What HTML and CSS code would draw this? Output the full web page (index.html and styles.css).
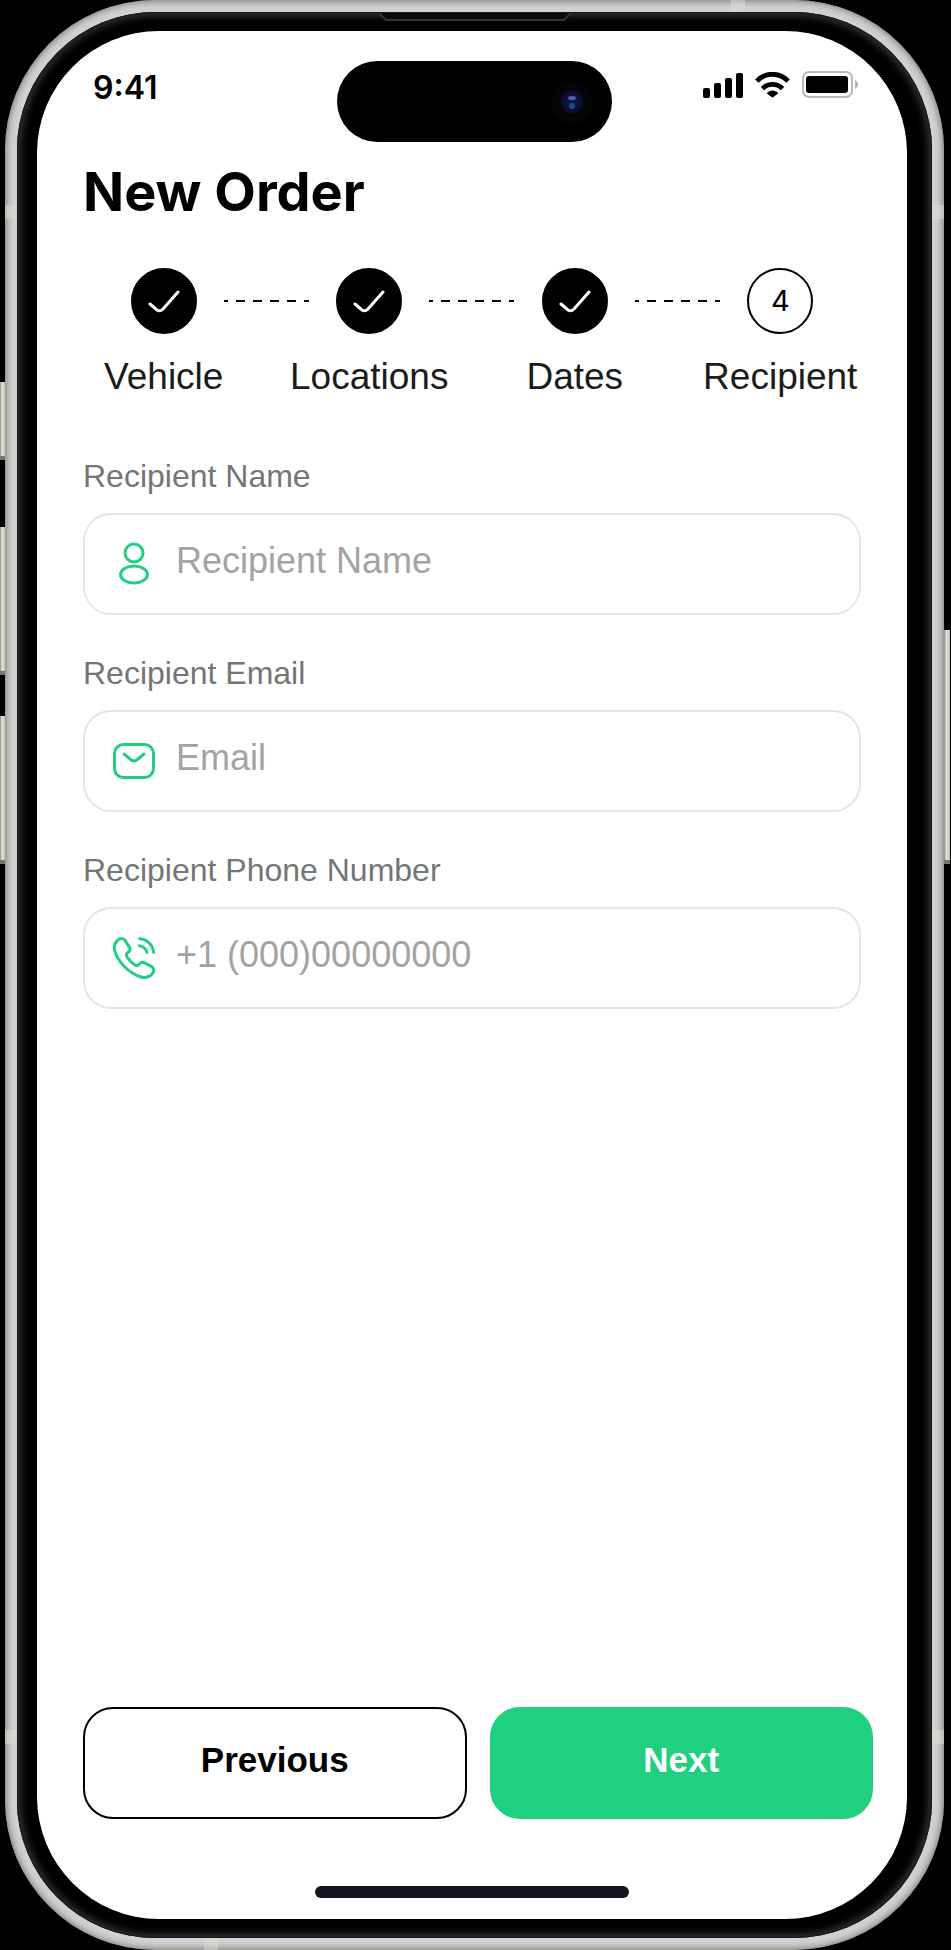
FILE: index.html
```html
<!DOCTYPE html>
<html lang="en">
<head>
<meta charset="utf-8">
<meta name="viewport" content="width=device-width, initial-scale=1">
<title>New Order</title>
<link rel="stylesheet" href="styles.css">
</head>
<body>
<div class="device">
  <span class="key key-action"></span>
  <span class="key key-up"></span>
  <span class="key key-down"></span>
  <span class="key key-power"></span>
  <span class="band band-side band-upper band-left"></span>
  <span class="band band-side band-upper band-right"></span>
  <span class="band band-side band-lower band-left"></span>
  <span class="band band-side band-lower band-right"></span>
  <span class="band band-top"></span>
  <span class="band band-bottom"></span>
  <div class="bezel">
    <svg class="speaker" width="192" height="9" viewBox="0 0 192 9" aria-hidden="true">
      <path d="M0 0H192L185 7H7Z" fill="#0b0b0b"/>
      <path d="M0 0L7 7H185L192 0" fill="none" stroke="#333" stroke-width="2"/>
    </svg>
    <div class="screen">
      <div class="island">
        <svg width="42" height="42" viewBox="0 0 42 42" aria-hidden="true">
          <circle cx="21" cy="21" r="21" fill="#050507"/>
          <circle cx="21" cy="21" r="11" fill="#0d0e33"/>
          <circle cx="21" cy="21" r="7" fill="#0a1540"/>
          <ellipse cx="21" cy="17" rx="4" ry="2" fill="#5560a8"/>
          <ellipse cx="21" cy="25" rx="3" ry="3" fill="#234a86"/>
        </svg>
      </div>
      <header class="status">
        <time class="clock">9:41</time>
        <div class="indicators">
          <svg width="40" height="26" viewBox="0 0 40 26" aria-label="Signal">
            <rect x="0" y="16" width="7" height="10" rx="2"/>
            <rect x="11" y="11" width="7" height="15" rx="2"/>
            <rect x="22" y="6" width="7" height="20" rx="2"/>
            <rect x="33" y="1" width="7" height="25" rx="2"/>
          </svg>
          <svg width="35" height="26" viewBox="0 0 106 80" aria-label="Wi-Fi">
            <path d="M5 28C32 0 74 0 101 28" fill="none" stroke="#000" stroke-width="15"/>
            <path d="M22 51C40 34 66 34 84 51" fill="none" stroke="#000" stroke-width="15"/>
            <path d="M35 65C46 54 60 54 71 65L53 79Z"/>
          </svg>
          <svg width="57" height="28" viewBox="0 0 57 28" aria-label="Battery">
            <rect x="1" y="1" width="49" height="25" rx="6" fill="none" stroke="#b9b9b9" stroke-width="2"/>
            <rect x="4" y="5" width="42" height="17" rx="3"/>
            <path d="M53 9C57 11 57 16 53 18Z" fill="#b0b0b0"/>
          </svg>
        </div>
      </header>

      <h1 class="title">New Order</h1>

      <ol class="steps">
        <li class="step">
          <span class="marker done"><svg width="32" height="24" viewBox="0 0 32 24" aria-hidden="true"><path class="tick" d="M2 15L9 21Q12 23 15 20L30 3"/></svg></span>
          <svg class="connector" width="85" height="2" viewBox="0 0 85 2" aria-hidden="true"><path d="M0 1H85"/></svg>
          <span class="step-label">Vehicle</span>
        </li>
        <li class="step">
          <span class="marker done"><svg width="32" height="24" viewBox="0 0 32 24" aria-hidden="true"><path class="tick" d="M2 15L9 21Q12 23 15 20L30 3"/></svg></span>
          <svg class="connector" width="85" height="2" viewBox="0 0 85 2" aria-hidden="true"><path d="M0 1H85"/></svg>
          <span class="step-label">Locations</span>
        </li>
        <li class="step">
          <span class="marker done"><svg width="32" height="24" viewBox="0 0 32 24" aria-hidden="true"><path class="tick" d="M2 15L9 21Q12 23 15 20L30 3"/></svg></span>
          <svg class="connector" width="85" height="2" viewBox="0 0 85 2" aria-hidden="true"><path d="M0 1H85"/></svg>
          <span class="step-label">Dates</span>
        </li>
        <li class="step" aria-current="step">
          <span class="marker">4</span>
          <span class="step-label">Recipient</span>
        </li>
      </ol>

      <form class="form">
        <div class="field">
          <label class="label" for="name">Recipient Name</label>
          <div class="box">
            <svg class="icon" width="44" height="44" viewBox="0 0 44 44" aria-hidden="true">
              <circle cx="22" cy="11" r="9"/>
              <ellipse cx="22" cy="32.500" rx="13.500" ry="8.500"/>
            </svg>
            <input class="input" id="name" type="text" placeholder="Recipient Name">
          </div>
        </div>
        <div class="field">
          <label class="label" for="email">Recipient Email</label>
          <div class="box">
            <svg class="icon" width="44" height="44" viewBox="0 0 44 44" aria-hidden="true">
              <rect x="2.500" y="5.500" width="39" height="33" rx="9"/>
              <path d="M12 15L18 20Q22 24 26 20L32 15"/>
            </svg>
            <input class="input" id="email" type="email" placeholder="Email">
          </div>
        </div>
        <div class="field">
          <label class="label" for="phone">Recipient Phone Number</label>
          <div class="box">
            <svg class="icon icon-phone" width="44" height="44" viewBox="-2 -2 132 132" aria-hidden="true">
              <path d="M14 12C20 4 32 3 37 11L51 33C55 40 51 44 45 48C39 52 40 57 45 64C51 72 58 79 66 84C72 88 76 88 79 83C84 76 88 75 94 78L117 90C124 94 125 103 120 110C112 121 97 125 85 121C45 108 14 72 6 42C3 31 5 21 14 12Z"/>
              <path d="M81 6C103 7 120 24 123 47M80 27C92 30 100 36 103 47"/>
            </svg>
            <input class="input" id="phone" type="tel" placeholder="+1 (000)00000000">
          </div>
        </div>
        <div class="actions">
          <button class="button" type="button">Previous</button>
          <button class="button primary" type="submit">Next</button>
        </div>
      </form>
      <div class="home"></div>
    </div>
  </div>
</div>
</body>
</html>
```
FILE: styles.css
```css
* {
  box-sizing: border-box;
}

body {
  margin: 0;
  background: #000;
  color: #000;
  font-family: "Liberation Sans", Arial, sans-serif;
}

.device {
  position: relative;
  display: flex;
  min-height: 100vh;
  margin: 0 7px 0 5px;
  padding: 12px;
  border-radius: 150px;
  background: #d0d1d0;
  box-shadow: inset 0 0 7px 1px #77736b;
}

.bezel {
  position: relative;
  display: flex;
  flex: 1;
  padding: 19px 25px 19px 20px;
  border-radius: 138px;
  background: #000;
  box-shadow: inset 0 0 0 1px #15171d, inset 0 0 9px 3px #3a3c3d;
}

.speaker {
  position: absolute;
  top: 1px;
  left: 362px;
}

.key {
  position: absolute;
  width: 5px;
  left: -5px;
  background: linear-gradient(90deg, #8b8983, #e4e2dc 40%, #c3c1b9);
  border-bottom: 4px solid #77756f;
}

.key-action {
  top: 382px;
  height: 78px;
}

.key-up {
  top: 527px;
  height: 148px;
}

.key-down {
  top: 716px;
  height: 148px;
}

.key-power {
  top: 630px;
  left: auto;
  right: -6px;
  width: 6px;
  height: 234px;
}

.band {
  position: absolute;
  background: #dddcd6;
  opacity: 0.5;
}

.band-side {
  width: 12px;
  height: 14px;
}

.band-upper {
  top: 205px;
}

.band-lower {
  bottom: 206px;
}

.band-left {
  left: 0;
}

.band-right {
  right: 0;
}

.band-top {
  top: 0;
  right: 199px;
  width: 14px;
  height: 12px;
}

.band-bottom {
  bottom: 0;
  left: 199px;
  width: 14px;
  height: 12px;
}

.screen {
  position: relative;
  display: flex;
  flex: 1;
  flex-direction: column;
  padding-bottom: 21px;
  border-radius: 122px;
  background: #fff;
}

.island {
  position: absolute;
  top: 30px;
  left: 300px;
  display: flex;
  align-items: center;
  justify-content: flex-end;
  width: 275px;
  height: 81px;
  padding-right: 19px;
  border-radius: 41px;
  background: #000;
}

.status {
  display: flex;
  align-items: flex-end;
  justify-content: space-between;
  padding: 37px 48px 0 56px;
}

.clock {
  font: 600 32px/40px Inter, sans-serif;
}

.indicators {
  display: flex;
  align-items: center;
  gap: 12px;
  margin-bottom: 9px;
}

.title {
  margin: 52px 46px 0;
  font: 700 54px/64px Inter, sans-serif;
}

.steps {
  display: grid;
  grid-template-columns: repeat(4, 1fr);
  margin: 44px 24px 0;
  padding: 0;
  list-style: none;
}

.step {
  display: grid;
  grid-template-columns: minmax(0, 1fr);
  justify-items: center;
  align-items: center;
  row-gap: 22px;
}

.marker {
  display: flex;
  grid-area: 1 / 1;
  align-items: center;
  justify-content: center;
  width: 66px;
  height: 66px;
  border: 2px solid #000;
  border-radius: 50%;
  font: 400 29px/32px Inter, sans-serif;
}

.done {
  background: #000;
}

.tick {
  fill: none;
  stroke: #fff;
  stroke-width: 3;
  stroke-linecap: round;
}

.connector {
  grid-area: 1 / 1;
  justify-self: end;
  margin-right: -42px;
  stroke: #000;
  stroke-width: 2;
  stroke-dasharray: 9 8;
  stroke-dashoffset: 5;
}

.step-label {
  color: #1c1c1c;
  font-size: 37px;
  line-height: 42px;
}

.form {
  display: flex;
  flex: 1;
  flex-direction: column;
  gap: 37px;
  margin-top: 57px;
}

.field {
  display: flex;
  flex-direction: column;
  gap: 16px;
  margin: 0 46px;
}

.label {
  color: #757575;
  font-size: 32px;
  line-height: 42px;
}

.box {
  display: flex;
  align-items: center;
  gap: 20px;
  height: 102px;
  padding: 0 27px;
  border: 2px solid #e5e5e5;
  border-radius: 28px;
}

.icon {
  flex: none;
  fill: none;
  stroke: #22ce81;
  stroke-width: 3;
  stroke-linecap: round;
  stroke-linejoin: round;
}

.icon-phone {
  stroke-width: 9;
}

.input {
  flex: 1;
  min-width: 0;
  height: 100%;
  padding: 0 0 6px;
  border: 0;
  outline: 0;
  background: none;
  color: #1c1c1c;
  font: 36px/42px "Liberation Sans", Arial, sans-serif;
}

.input::placeholder {
  color: #a3a3a3;
  opacity: 1;
}

.actions {
  display: grid;
  grid-template-columns: 1fr 1fr;
  gap: 23px;
  margin: auto 34px 0 46px;
}

.button {
  height: 112px;
  padding: 0 0 6px;
  border: 2px solid #000;
  border-radius: 30px;
  background: #fff;
  color: #000;
  font: 700 35px/40px "Liberation Sans", Arial, sans-serif;
}

.primary {
  border-color: #1fd081;
  background: #1fd081;
  color: #fff;
}

.home {
  align-self: center;
  width: 36%;
  height: 12px;
  margin-top: 67px;
  border-radius: 6px;
  background: #15131f;
}
```
